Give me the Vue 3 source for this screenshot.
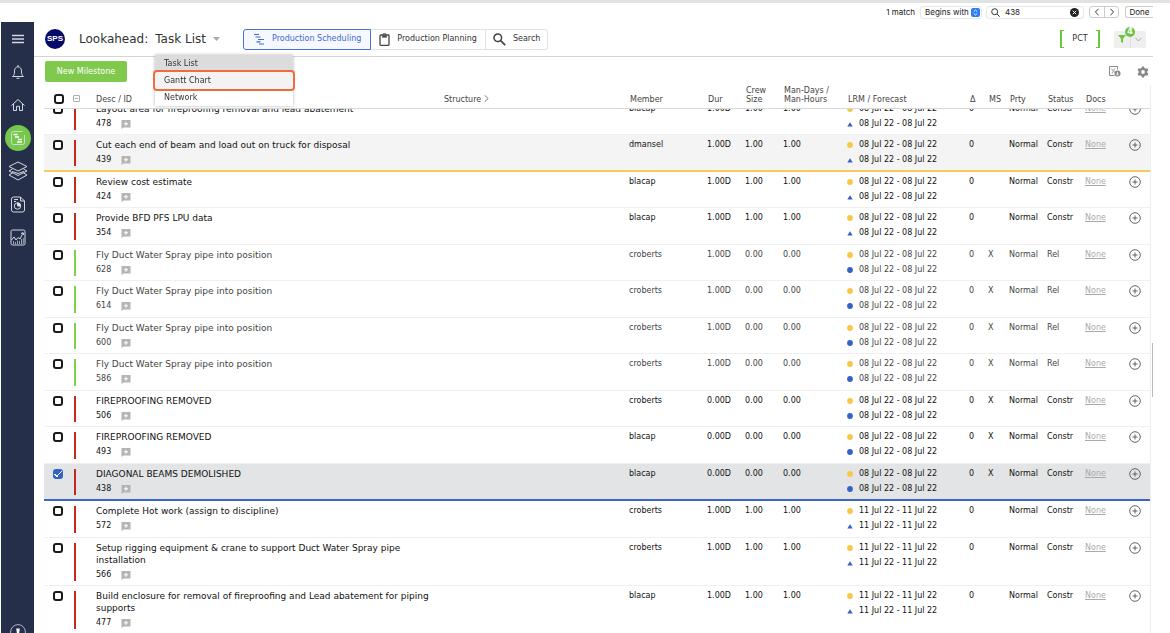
<script setup>
import { ref, onMounted } from 'vue'

const query = ref('438')
const matchMode = ref('Begins with')
const scroller = ref(null)

const menu = ['Task List', 'Gantt Chart', 'Network']

const D8 = '08 Jul 22 - 08 Jul 22'
const D11 = '11 Jul 22 - 11 Jul 22'

const row = (id, desc, member, qty, date, shape, ms, status) => ({
  id,
  desc,
  member,
  dur: qty + 'D',
  qty,
  date,
  shape,
  ms,
  status,
})

const tasks = ref([
  row(478, 'Layout area for fireproofing removal and lead abatement', 'blacap', '1.00', D8, 'tri', '', 'Constr'),
  row(439, 'Cut each end of beam and load out on truck for disposal', 'dmansel', '1.00', D8, 'tri', '', 'Constr'),
  row(424, 'Review cost estimate', 'blacap', '1.00', D8, 'tri', '', 'Constr'),
  row(354, 'Provide BFD PFS LPU data', 'blacap', '1.00', D8, 'tri', '', 'Constr'),
  row(628, 'Fly Duct Water Spray pipe into position', 'croberts', '0.00', D8, 'dot', 'X', 'Rel'),
  row(614, 'Fly Duct Water Spray pipe into position', 'croberts', '0.00', D8, 'dot', 'X', 'Rel'),
  row(600, 'Fly Duct Water Spray pipe into position', 'croberts', '0.00', D8, 'dot', 'X', 'Rel'),
  row(586, 'Fly Duct Water Spray pipe into position', 'croberts', '0.00', D8, 'dot', 'X', 'Rel'),
  row(506, 'FIREPROOFING REMOVED', 'croberts', '0.00', D8, 'dot', 'X', 'Constr'),
  row(493, 'FIREPROOFING REMOVED', 'blacap', '0.00', D8, 'dot', 'X', 'Constr'),
  row(438, 'DIAGONAL BEAMS DEMOLISHED', 'blacap', '0.00', D8, 'dot', 'X', 'Constr'),
  row(572, 'Complete Hot work (assign to discipline)', 'croberts', '1.00', D11, 'tri', '', 'Constr'),
  row(566, 'Setup rigging equipment & crane to support Duct Water Spray pipe installation', 'croberts', '1.00', D11, 'tri', '', 'Constr'),
  row(477, 'Build enclosure for removal of fireproofing and Lead abatement for piping supports', 'blacap', '1.00', D11, 'tri', '', 'Constr'),
])
tasks.value.forEach((t) => {
  t.checked = t.id === 438
  if (t.status === 'Rel') t.dur = '1.00D'
})

onMounted(() => {
  scroller.value.scrollTop = 10
})
</script>

<template>
  <div class="window">
    <form class="find" @submit.prevent>
      <span class="count">1 match</span>
      <label class="mode">
        <select v-model="matchMode" aria-label="Match mode">
          <option>Begins with</option>
          <option>Contains</option>
        </select>
        <svg width="9" height="9" viewBox="0 0 9 9">
          <rect width="9" height="9" rx="2" fill="#2f7df6" />
          <path d="M2.8 3.6 4.5 2l1.7 1.6M2.8 5.4 4.5 7l1.7-1.6" fill="none" stroke="#fff" stroke-width=".9" />
        </svg>
      </label>
      <label class="field">
        <svg width="9" height="9" viewBox="0 0 9 9" fill="none" stroke="#333" stroke-width="1">
          <circle cx="3.7" cy="3.7" r="3" />
          <path d="m6 6 2.7 2.7" />
        </svg>
        <input v-model="query" type="text" aria-label="Find" />
        <button type="button" class="bare" aria-label="Clear">
          <svg width="9" height="9" viewBox="0 0 9 9">
            <circle cx="4.5" cy="4.5" r="4.5" fill="#222" />
            <path d="m2.8 2.8 3.4 3.4m0-3.4L2.8 6.2" stroke="#fff" stroke-width="1" />
          </svg>
        </button>
      </label>
      <div class="steps">
        <button type="button" aria-label="Previous">
          <svg width="6" height="8" viewBox="0 0 6 8"><path d="M4.6.8 1.4 4l3.2 3.2" /></svg>
        </button>
        <button type="button" aria-label="Next">
          <svg width="6" height="8" viewBox="0 0 6 8"><path d="M1.4.8 4.6 4 1.4 7.2" /></svg>
        </button>
      </div>
      <button type="button" class="done">Done</button>
    </form>

    <div class="app">
      <nav class="rail" aria-label="Main">
        <a href="#menu" aria-label="Menu">
          <svg width="12" height="10" viewBox="0 0 12 10"><path d="M0 1.5h12M0 5h12M0 8.500h12" stroke-width="1.3" /></svg>
        </a>
        <a href="#alerts" aria-label="Notifications">
          <svg width="14" height="16" viewBox="0 0 14 16">
            <path d="M1.500 12.500c1.500-1 2-2 2-5.500C3.500 4.500 5 2.800 7 2.800S10.500 4.500 10.500 7c0 3.500.5 4.500 2 5.500zM7 2.800V1M5.500 14.300h3" />
          </svg>
        </a>
        <a href="#home" aria-label="Home">
          <svg width="16" height="14" viewBox="0 0 16 14">
            <path d="M1.500 7.500 8 1.500l6.500 6M3.500 6v6.500H6.500V8.300h3v4.200h3V6" />
          </svg>
        </a>
        <a href="#schedule" class="active" aria-label="Scheduling">
          <svg width="16" height="16" viewBox="0 0 16 16">
            <path d="M14.500 5v7.500a2 2 0 0 1-2 2h-9a2 2 0 0 1-2-2v-9a2 2 0 0 1 2-2h9" />
            <path d="M3.500 4.500h4M5 7h4M8 9.500h4M7 12h5" stroke="#fff" stroke-width="1.400" />
          </svg>
        </a>
        <a href="#layers" aria-label="Layers">
          <svg width="20" height="20" viewBox="0 0 20 20">
            <path d="m10 1 9 4.500-9 4.500-9-4.500zM4.500 8 1 10l9 4.500 9-4.500-3.500-2M4.500 12 1 14l9 5 9-5-3.500-2M4 10.500l6 2 6-2" />
          </svg>
        </a>
        <a href="#reports" aria-label="Reports">
          <svg width="16" height="17" viewBox="0 0 16 17">
            <path d="M10.500 1h-7a2 2 0 0 0-2 2v11a2 2 0 0 0 2 2h9a2 2 0 0 0 2-2V5zM10.500 1v4h4M4 3.500h4M4 5.500h2" />
            <circle cx="7.500" cy="10" r="3.200" />
            <path d="M7.500 6.800V10h3.200A3.200 3.200 0 0 0 7.500 6.800z" fill="#e9ecf3" />
          </svg>
        </a>
        <a href="#analytics" aria-label="Analytics">
          <svg width="16" height="17" viewBox="0 0 16 17">
            <rect x="1" y="1" width="14" height="15" rx="1.500" />
            <path d="m1.500 11 2.500-3 2 3 2-2.500 2 1.500 3-6M11 4.500l2.200-.8.600 2.300" />
            <path d="M3.500 12v3M5.500 13v2M7.500 11.500V15M9.500 12v3M11.500 10v5M13.300 9v6" stroke-width=".7" />
          </svg>
        </a>
        <a href="#account" class="account" aria-label="Account">
          <svg width="16" height="16" viewBox="0 0 16 16">
            <circle cx="8" cy="8" r="7.400" stroke-width=".8" />
            <path d="M6.200 4.500h3.600L9 10H7z" fill="#fff" stroke="none" />
          </svg>
        </a>
      </nav>

      <main class="main">
        <header class="head">
          <span class="logo">SPS</span>
          <div class="picker">
            <button type="button" class="title" aria-haspopup="menu">
              <span>Lookahead:</span>
              <span>Task List</span>
              <svg width="7" height="4" viewBox="0 0 7 4"><path d="M0 0h7L3.500 4z" fill="#aaa" /></svg>
            </button>
            <div class="menu" role="menu">
              <button v-for="(m, i) in menu" :key="m" type="button" role="menuitem" :class="{ current: i === 0, marked: i === 1 }">{{ m }}</button>
            </div>
          </div>
          <div class="tabs">
            <button type="button" class="on">
              <svg width="12" height="12" viewBox="0 0 12 12" fill="none" stroke="#3f6ad0" stroke-width="1.200">
                <path d="M1 1.500h5M2.500 4h5M5 6.500h6M3.500 8.800h4M6 11h5" />
              </svg>
              Production Scheduling
            </button>
            <button type="button">
              <svg width="11" height="13" viewBox="0 0 11 13" fill="none" stroke="#444" stroke-width="1.300">
                <rect x="1" y="2" width="9" height="10.300" rx=".8" />
                <path d="M3.200 2.600v2h4.600v-2z" fill="#444" stroke="none" />
                <path d="M4 1.900a1.500 1.500 0 0 1 3 0" stroke-width="1" />
              </svg>
              Production Planning
            </button>
            <button type="button">
              <svg width="13" height="13" viewBox="0 0 13 13" fill="none" stroke="#444" stroke-width="1.500">
                <circle cx="4.800" cy="4.800" r="3.800" />
                <path d="m7.600 7.600 4.600 4.600" stroke-width="1.800" />
              </svg>
              Search
            </button>
          </div>
          <button type="button" class="pct">PCT</button>
          <div class="filter">
            <button type="button" aria-label="Filter">
              <svg width="8" height="8" viewBox="0 0 8 8"><path d="M0 0h8L5 3.800V8L3 7V3.800z" fill="#6cc53e" /></svg>
            </button>
            <button type="button" aria-label="Filter options">
              <svg width="7" height="5" viewBox="0 0 7 5"><path d="M.5.800 3.500 4l3-3.200" fill="none" stroke="#aaa" /></svg>
            </button>
            <span class="badge">4</span>
          </div>
        </header>

        <div class="tools">
          <button type="button" class="new">New Milestone</button>
          <button type="button" class="bare" aria-label="Export">
            <svg width="12" height="11" viewBox="0 0 12 11" fill="none" stroke="#888">
              <path d="M8.500 3.500v-3h-8v9h5" />
              <path d="m2.300 2.500 2 2.500M5.800 2.500 3 7.500M5 6h1.500" stroke-width=".8" />
              <circle cx="8.500" cy="7.500" r="3" fill="#888" stroke="none" />
              <path d="M8.500 5.800v3M7.200 7.800l1.300 1.300 1.300-1.300" stroke="#fff" stroke-width=".8" />
            </svg>
          </button>
          <button type="button" class="bare" aria-label="Settings">
            <svg width="12" height="12" viewBox="0 0 12 12">
              <g fill="#888">
                <circle cx="6" cy="6" r="4.300" />
                <rect x="4.700" y=".4" width="2.600" height="11.200" rx=".6" />
                <rect x="4.700" y=".4" width="2.600" height="11.200" rx=".6" transform="rotate(60 6 6)" />
                <rect x="4.700" y=".4" width="2.600" height="11.200" rx=".6" transform="rotate(120 6 6)" />
              </g>
              <circle cx="6" cy="6" r="1.900" fill="#fff" />
            </svg>
          </button>
        </div>

        <div class="grid">
          <div ref="scroller" class="scroll">
            <table>
              <colgroup>
                <col class="c-check" /><col class="c-bar" /><col /><col class="c-structure" />
                <col class="c-member" /><col class="c-num" /><col class="c-num" /><col class="c-hours" />
                <col class="c-dates" /><col class="c-delta" /><col class="c-ms" /><col class="c-num" />
                <col class="c-num" /><col class="c-docs" /><col class="c-add" />
              </colgroup>
              <thead>
                <tr>
                  <th class="check"><input type="checkbox" aria-label="Select all" /></th>
                  <th>
                    <svg width="7" height="7" viewBox="0 0 7 7" fill="none" stroke="#999" stroke-width=".8">
                      <rect x=".5" y=".5" width="6" height="6" rx=".5" /><path d="M1.800 3.500h3.400" />
                    </svg>
                  </th>
                  <th class="flush">Desc / ID</th>
                  <th class="flush">
                    Structure
                    <svg width="5" height="7" viewBox="0 0 5 7" fill="none" stroke="#666" stroke-width=".9"><path d="m.8.300 3.200 3.200L.8 6.700" /></svg>
                  </th>
                  <th>Member</th>
                  <th>Dur</th>
                  <th>Crew<br />Size</th>
                  <th>Man-Days /<br />Man-Hours</th>
                  <th>LRM / Forecast</th>
                  <th>Δ</th>
                  <th>MS</th>
                  <th>Prty</th>
                  <th>Status</th>
                  <th>Docs</th>
                  <th></th>
                </tr>
              </thead>
              <tbody>
                <tr v-for="t in tasks" :key="t.id" :class="{ released: t.status === 'Rel', selected: t.checked, today: t.id === 439 }">
                  <td class="check"><input v-model="t.checked" type="checkbox" :aria-label="'Select task ' + t.id" /></td>
                  <td class="bar"></td>
                  <td class="desc">
                    {{ t.desc }}
                    <div class="id">
                      <span>{{ t.id }}</span>
                      <svg width="10" height="9" viewBox="0 0 10 9">
                        <path d="M.5 0h9v7.500h-7L.5 9z" fill="#b4b4b4" />
                        <path d="M5 1.700v4.200M2.900 3.800h4.200" stroke="#fff" />
                      </svg>
                    </div>
                  </td>
                  <td></td>
                  <td>{{ t.member }}</td>
                  <td>{{ t.dur }}</td>
                  <td>{{ t.qty }}</td>
                  <td>{{ t.qty }}</td>
                  <td>
                    <div class="date">
                      <svg width="6" height="6" viewBox="0 0 6 6"><circle cx="3" cy="3" r="2.900" fill="#f9c646" /></svg>{{ t.date }}
                    </div>
                    <div class="date">
                      <svg width="6" height="6" viewBox="0 0 6 6">
                        <path v-if="t.shape === 'tri'" d="M3 1.200 5.700 5.600H.3z" fill="#3463c8" />
                        <circle v-else cx="3" cy="3" r="2.900" fill="#3463c8" />
                      </svg>{{ t.date }}
                    </div>
                  </td>
                  <td>0</td>
                  <td>{{ t.ms }}</td>
                  <td>Normal</td>
                  <td>{{ t.status }}</td>
                  <td><a href="#docs">None</a></td>
                  <td>
                    <button type="button" class="bare" :aria-label="'Add to task ' + t.id">
                      <svg width="12" height="12" viewBox="0 0 12 12" fill="none" stroke="#555" stroke-width=".9">
                        <circle cx="6" cy="6" r="5.300" /><path d="M6 3.500v5M3.500 6h5" />
                      </svg>
                    </button>
                  </td>
                </tr>
              </tbody>
            </table>
          </div>
          <span class="thumb"></span>
        </div>
      </main>
    </div>
  </div>
</template>

<style>
body {
  background: #fff;
}
</style>

<style scoped>
.window {
  display: flex;
  flex-direction: column;
  height: 100vh;
  overflow: hidden;
  box-sizing: border-box;
  padding: 0 17px 0 1px;
  background: linear-gradient(#e2e2e2, #e2e2e2) no-repeat 0 0 / 100% 3px;
  font: 8px/12px Verdana, "DejaVu Sans", sans-serif;
  color: #111;
}
button,
input,
select {
  font: inherit;
  color: inherit;
  margin: 0;
  padding: 0;
}
button {
  background: none;
  border: 0;
}
svg {
  flex: none;
}
.bare {
  display: block;
}
.bare svg {
  display: block;
}

/* find bar */
.find {
  display: flex;
  justify-content: flex-end;
  align-items: center;
  gap: 6px;
  height: 22px;
  flex: none;
  box-sizing: border-box;
  padding-top: 2px;
  overflow: hidden;
  font-family: Inter, sans-serif;
  color: #222;
}
.mode {
  display: flex;
  align-items: center;
  height: 11px;
  padding: 0 1px 0 4px;
  border-radius: 3px;
  box-shadow: 0 0 1px 1px #e6e6e6;
}
.mode select {
  width: 46px;
  border: 0;
  background: none;
  appearance: none;
}
.field {
  display: flex;
  align-items: center;
  gap: 5px;
  width: 88px;
  height: 11px;
  padding: 0 4px;
  border-radius: 3px;
  box-shadow: 0 0 1px 1px #e6e6e6;
}
.field input {
  flex: 1;
  min-width: 0;
  border: 0;
  outline: 0;
  background: none;
}
.steps {
  display: flex;
  border: 1px solid #ccc;
  border-radius: 3px;
}
.steps button {
  display: flex;
  justify-content: center;
  align-items: center;
  width: 14px;
  height: 10px;
}
.steps button + button {
  border-left: 1px solid #ccc;
}
.steps path {
  fill: none;
  stroke: #333;
}
.done {
  width: 28px;
  height: 12px;
  line-height: 10px;
  border: 1px solid #ccc;
  border-right: 0;
  border-radius: 3px 0 0 3px;
}

/* shell */
.app {
  display: flex;
  flex: 1;
  min-height: 0;
}
.rail {
  position: relative;
  display: flex;
  flex-direction: column;
  align-items: center;
  gap: 7px;
  width: 33px;
  flex: none;
  padding-top: 4px;
  box-sizing: border-box;
  background: #252f49;
}
.rail a {
  display: flex;
  justify-content: center;
  align-items: center;
  width: 26px;
  height: 26px;
  border-radius: 50%;
}
.rail svg {
  fill: none;
  stroke: #d3d7e2;
  stroke-width: 1;
}
.rail .active {
  background: #76c84a;
}
.rail .account {
  position: absolute;
  bottom: -12px;
}
.main {
  display: flex;
  flex-direction: column;
  flex: 1;
  min-width: 0;
}

/* title bar */
.head {
  display: flex;
  align-items: center;
  height: 35px;
  flex: none;
  box-sizing: border-box;
  padding: 0 7px 0 11px;
  border-bottom: 1px solid #d4d4d4;
}
.logo {
  width: 20px;
  height: 20px;
  margin-right: 14px;
  border-radius: 50%;
  background: #060a68;
  color: #fff;
  font: bold 8px/20px "Liberation Sans", Arial, sans-serif;
  text-align: center;
}
.picker {
  position: relative;
}
.title {
  display: flex;
  align-items: center;
  gap: 7px;
  font-size: 12px;
  line-height: 20px;
  color: #333;
  white-space: nowrap;
}
.menu {
  position: absolute;
  z-index: 5;
  left: 76px;
  top: 26px;
  display: flex;
  flex-direction: column;
  width: 138px;
  background: #fff;
  box-shadow: 0 0 3px rgba(0, 0, 0, 0.3);
}
.menu button {
  height: 17px;
  padding-left: 9px;
  text-align: left;
  color: #333;
}
.menu .current {
  background: #dcdcdc;
}
.menu .marked {
  background: #f3f3f3;
  border-radius: 2px;
  box-shadow: 0 0 0 2px #f26b3f;
}
.tabs {
  display: flex;
  margin: 0 auto 0 23px;
}
.tabs button {
  display: flex;
  align-items: center;
  gap: 7px;
  height: 21px;
  padding: 0 8px;
  border: 1px solid #e2e2e2;
  border-left: 0;
  color: #333;
  white-space: nowrap;
}
.tabs .on {
  padding: 0 9px;
  border: 1px solid #4a72d4;
  border-radius: 3px 0 0 3px;
  background: #f5f8fe;
  color: #3f6ad0;
}
.tabs button:last-child {
  padding: 0 7px;
  border-radius: 0 3px 3px 0;
}
.pct {
  width: 40px;
  height: 18px;
  margin-right: 14px;
  font-size: 8px;
  color: #333;
  background:
    linear-gradient(#6cc53e, #6cc53e) no-repeat 0 0 / 2px 1px,
    linear-gradient(#6cc53e, #6cc53e) no-repeat 0 100% / 2px 1px,
    linear-gradient(#6cc53e, #6cc53e) no-repeat 100% 0 / 2px 1px,
    linear-gradient(#6cc53e, #6cc53e) no-repeat 100% 100% / 2px 1px;
  border-left: 2px solid #6cc53e;
  border-right: 2px solid #6cc53e;
}
.filter {
  position: relative;
  display: flex;
  background: #efefef;
  border-radius: 2px;
}
.filter button {
  display: flex;
  align-items: center;
  justify-content: center;
  width: 16px;
  height: 17px;
}
.filter button + button {
  border-left: 1px solid #ddd;
}
.badge {
  position: absolute;
  left: 11px;
  top: -4px;
  width: 10px;
  height: 10px;
  border-radius: 50%;
  background: #6cc53e;
  color: #fff;
  font-weight: bold;
  line-height: 10px;
  text-align: center;
}

/* toolbar */
.tools {
  display: flex;
  align-items: center;
  gap: 16px;
  padding: 4px 4px 3px 11px;
}
.new {
  width: 82px;
  height: 21px;
  margin-right: auto;
  border-radius: 2px;
  background: #7fca4d;
  color: #fff;
}

/* task table */
.grid {
  position: relative;
  flex: 1;
  min-height: 0;
  padding: 0 3px 0 10px;
}
.scroll {
  height: 100%;
  overflow-y: auto;
  scrollbar-width: none;
  border-right: 1px solid #eee;
  margin-right: -1px;
}
.thumb {
  position: absolute;
  right: 0;
  top: 47%;
  width: 1px;
  height: 10%;
  background: #bbb;
}
table {
  width: 100%;
  table-layout: fixed;
  border-collapse: separate;
  border-spacing: 0;
}
.c-check { width: 28px; }
.c-bar { width: 24px; }
.c-structure { width: 185px; }
.c-member { width: 78px; }
.c-num { width: 38px; }
.c-hours { width: 64px; }
.c-dates { width: 122px; }
.c-delta { width: 19px; }
.c-ms { width: 21px; }
.c-docs { width: 44px; }
.c-add { width: 21px; }
th {
  position: sticky;
  top: 0;
  z-index: 1;
  height: 24px;
  box-sizing: border-box;
  padding: 0 0 4px 1px;
  border-bottom: 1px solid #d8d8d8;
  background: #fff;
  color: #444;
  font-weight: normal;
  line-height: 9px;
  text-align: left;
  vertical-align: bottom;
  white-space: nowrap;
}
th.flush {
  padding-left: 0;
}
td {
  height: 36px;
  box-sizing: border-box;
  padding: 4px 0 0;
  border-bottom: 1px solid #f0f0f0;
  vertical-align: top;
}
tr:nth-child(even) td {
  height: 37px;
}
.today td {
  background-color: #f4f4f4;
  border-bottom: 2px solid #f5cb60;
}
.selected td {
  background-color: #e3e4e6;
  border-bottom: 2px solid #3f66bd;
}
.released td {
  color: #444;
}
td.bar {
  background-image: linear-gradient(#c4281f, #c4281f);
  background-repeat: no-repeat;
  background-position: 2px 5px;
  background-size: 2px calc(100% - 9px);
}
.released td.bar {
  background-image: linear-gradient(#7fd04d, #7fd04d);
}
.desc {
  font-size: 9px;
  padding-bottom: 4px;
}
.id {
  display: flex;
  align-items: center;
  gap: 10px;
  margin-top: 3px;
  font-size: 8px;
}
.date {
  display: flex;
  align-items: center;
  gap: 6px;
  margin-bottom: 3px;
  white-space: nowrap;
}
td a {
  color: #aaa;
}
.check input {
  display: block;
  appearance: none;
  box-sizing: border-box;
  width: 10px;
  height: 10px;
  margin: 1px 0 0 9px;
  border: 2px solid #1a1a1a;
  border-radius: 3px;
  background: #fff;
}
.check input:checked {
  border: 0;
  background:
    linear-gradient(45deg, transparent 42%, #fff 42% 58%, transparent 58%) no-repeat 1px 5px / 4px 3px,
    linear-gradient(-45deg, transparent 42%, #fff 42% 58%, transparent 58%) no-repeat 3px 2px / 6px 6px,
    #3463c8;
}
</style>
